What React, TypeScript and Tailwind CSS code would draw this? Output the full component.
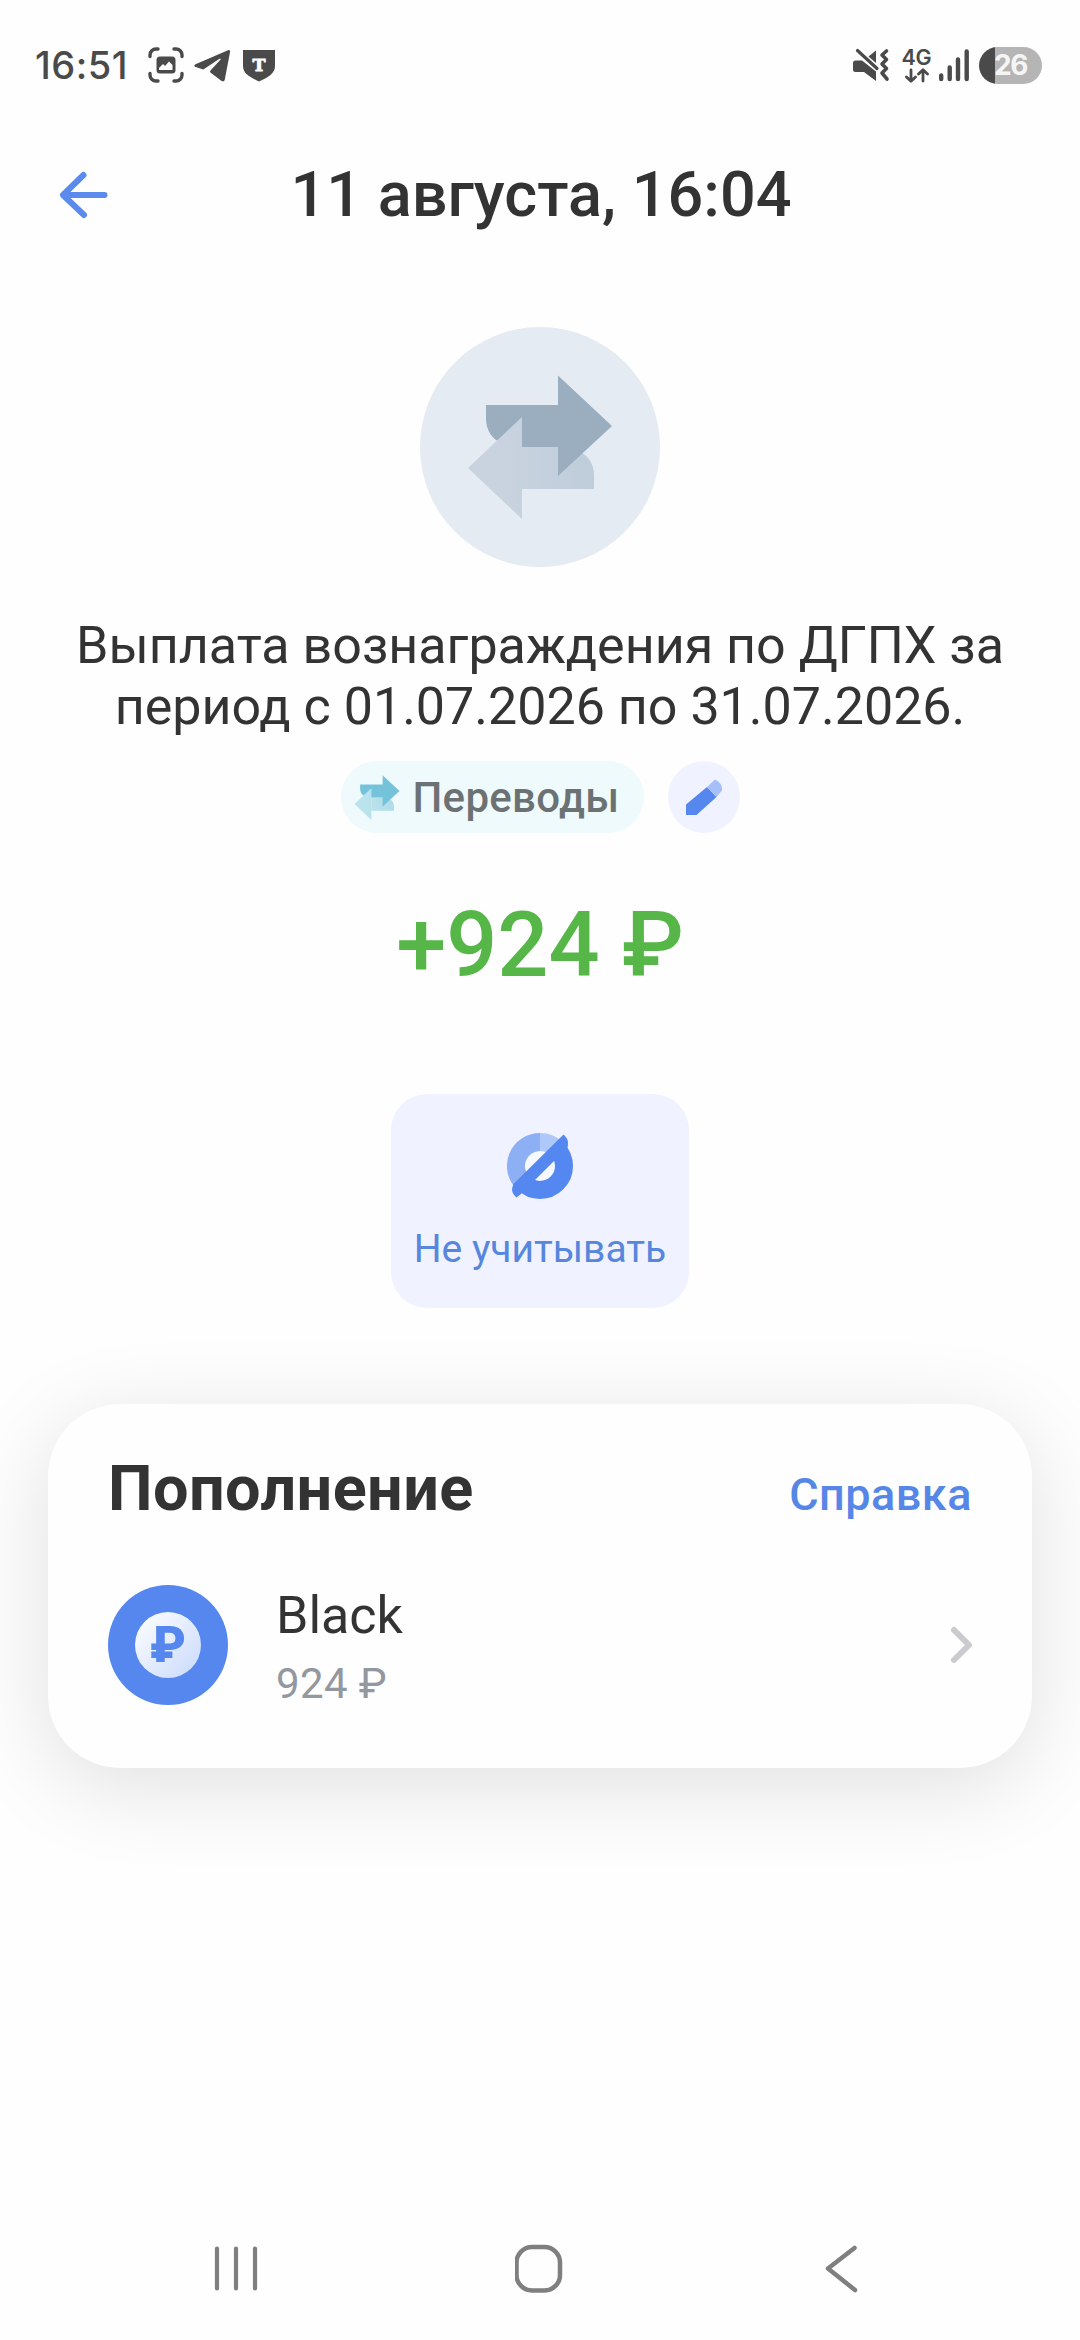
import React from "react";

function TransferArrows({ className, dark, lightA, lightB, id }: { className: string; dark: string; lightA: string; lightB: string; id: string }) {
  return (
    <svg className={className} viewBox="0 0 144 144" fill="none">
      <defs>
        <linearGradient id={id} x1="0" y1="0" x2="126" y2="0" gradientUnits="userSpaceOnUse">
          <stop offset="0.3" stopColor={lightA} />
          <stop offset="1" stopColor={lightB} />
        </linearGradient>
      </defs>
      <path d="M54 72H90C112 72 126 82 126 101V114H54Z" fill={`url(#${id})`} />
      <path d="M18 30H90V0.5L144 51L90 101V72H54C32 72 18 62 18 43Z" fill={dark} />
      <path d="M54 42V144L0 93Z" fill={`url(#${id})`} />
    </svg>
  );
}

function StatusBar() {
  return (
    <div className="flex h-[130px] items-center justify-between pr-[38px] pl-[35px] text-[#4a4a4a]">
      <div className="flex items-center">
        <span className="w-[113px] font-['Inter'] text-[38px] leading-none font-medium tracking-[0.5px] whitespace-nowrap">16:51</span>
        <svg className="h-[36px] w-[36px]" viewBox="0 0 36 36" fill="none" stroke="currentColor" strokeWidth="3.4" strokeLinecap="round">
          <path d="M2 9.500V8a6 6 0 0 1 6-6h2M26 2h2a6 6 0 0 1 6 6v1.500M34 26.500V28a6 6 0 0 1-6 6h-2M10 34H8a6 6 0 0 1-6-6v-1.500" />
          <rect x="8.500" y="9.500" width="19" height="17" rx="3.500" fill="currentColor" stroke="none" />
          <path d="M11 23v-2l4-4 2 2 4-4.500 3.500 3.500v5z" fill="#fefefe" stroke="none" />
        </svg>
        <svg className="ml-[9px] h-[36px] w-[38px]" viewBox="0 0 38 36" fill="currentColor">
          <path d="M35 3.200L2.500 17.200c-1.600.8-1.600 2.300.2 2.900l7.600 2.500L26.500 11.800c1-.5 1.600.2.900.9L17.500 23.500c-.6.700-.6 1.600.2 2.200l10.600 8c1.700 1.100 3 .7 3.500-1.300L37 5.200c.4-1.800-.6-2.600-2-2z" />
        </svg>
        <svg className="ml-[12px] h-[33px] w-[32px]" viewBox="0 0 32 33">
          <path d="M0 1H32V17C32 24 26 28 16 32.500C6 28 0 24 0 17Z" fill="currentColor" />
          <text x="16" y="22" textAnchor="middle" fontFamily="DejaVu Serif" fontWeight="700" fontSize="17.500" fill="#fefefe" stroke="#fefefe" strokeWidth="0.800">T</text>
        </svg>
      </div>
      <div className="flex items-center">
        <svg className="h-[34px] w-[37px]" viewBox="0 0 37 34" fill="currentColor">
          <path d="M0 15a2.500 2.500 0 0 1 2.500-2.500H9L23 23.500V33L11 24H2.500A2.500 2.500 0 0 1 0 21.500Z" />
          <path d="M15.500 8.500L23 2.500V15Z" />
          <path d="M4.500 2.500L24 20.500" stroke="currentColor" strokeWidth="3.200" strokeLinecap="round" />
          <path d="M33.500 3L29 7l4.500 4.500L29 16l4.500 4.500L29 25l5 6" fill="none" stroke="currentColor" strokeWidth="3.600" strokeLinecap="round" strokeLinejoin="round" />
        </svg>
        <div className="ml-[11px] flex w-[31px] flex-col items-center">
          <span className="font-['Inter'] text-[21.500px] leading-[19px] font-semibold tracking-[-0.300px]">4G</span>
          <svg className="mt-[1px] h-[15px] w-[26px]" viewBox="0 0 26 15" fill="none" stroke="currentColor" strokeWidth="2.800" strokeLinecap="round" strokeLinejoin="round">
            <path d="M7 2v11M2.500 9L7 13.300 11.500 9M19 13V2M14.500 6L19 1.700 23.500 6" />
          </svg>
        </div>
        <svg className="ml-[6px] h-[35px] w-[31px]" viewBox="0 0 31 35" stroke="currentColor" strokeWidth="4.400" strokeLinecap="round">
          <path d="M3.200 27.500V31M11.700 19.500V31M20 11.500V31M28.700 3.500V31" />
        </svg>
        <div className="ml-[10px] flex h-[37px] w-[63px] items-center justify-center overflow-hidden rounded-full bg-gradient-to-r from-[#4a4a4a] from-[25.500%] to-[#b5b5b5] to-[25.500%]">
          <span className="font-['Inter'] text-[28px] leading-none font-bold tracking-[-1.500px] text-[#f5f5f5]">26</span>
        </div>
      </div>
    </div>
  );
}

function Header() {
  return (
    <header className="flex h-[130px] items-center">
      <div className="flex w-[168px] pl-[58px]">
        <svg className="h-[50px] w-[50px]" viewBox="0 0 50 50" fill="none" stroke="#5a8aec" strokeWidth="6" strokeLinecap="round" strokeLinejoin="round">
          <path d="M46.500 25H5.500M25.500 5L5 25l21 20" />
        </svg>
      </div>
      <h1 className="flex-1 text-center text-[63px] leading-[74px] font-medium whitespace-nowrap">11 августа, 16:04</h1>
      <div className="w-[166px]" />
    </header>
  );
}

function ExcludeIcon() {
  return (
    <svg className="h-[66px] w-[66px] overflow-visible" viewBox="0 0 66 66" fill="none">
      <defs>
        <clipPath id="lowerHalf">
          <path d="M66 -4V66H-4Z" />
        </clipPath>
      </defs>
      <circle cx="33" cy="33" r="15" fill="#f6f9ff" />
      <path d="M33 9A24 24 0 0 0 16 50" stroke="#8cb0f3" strokeWidth="18" />
      <path d="M33 9A24 24 0 0 1 50 16" stroke="#afc8fa" strokeWidth="18" />
      <circle cx="33" cy="33" r="24" stroke="#5587f0" strokeWidth="18" clipPath="url(#lowerHalf)" />
      <path d="M56.500 1.500C60 4.500 62 8 60.500 14.500L14 61L9.500 64.500C5 61 3.500 56 7 50.500Z" fill="#5587f0" />
    </svg>
  );
}

function AccountCard() {
  return (
    <section className="mx-12 mt-[96px] h-[364px] rounded-[72px] bg-[#fefefe] px-[60px] pt-[48px] shadow-[0_18px_90px_rgba(0,0,0,0.12)]">
      <div className="flex items-center justify-between">
        <h2 className="text-[63px] leading-[74px] font-bold tracking-[0.400px]">Пополнение</h2>
        <a className="mt-[12px] text-[45px] leading-[52px] font-medium tracking-[0.500px] text-[#5787e6]">Справка</a>
      </div>
      <div className="mt-[59px] flex h-[120px] items-center">
        <div className="flex h-[120px] w-[120px] items-center justify-center rounded-full bg-[#5587ee]">
          <div className="flex h-[66px] w-[66px] items-center justify-center rounded-full bg-gradient-to-br from-white to-[#c9d9fb]">
            <span className="text-[50px] leading-[66px] font-black text-[#5587ee]">₽</span>
          </div>
        </div>
        <div className="mt-[5px] ml-[48px] flex flex-1 flex-col gap-[12px]">
          <span className="text-[52px] leading-[60px]">Black</span>
          <span className="text-[42px] leading-[52px] tracking-[0.400px] text-[#9397a0]">924 ₽</span>
        </div>
        <svg className="-mr-[3px] h-[42px] w-[30px]" viewBox="0 0 30 42" fill="none" stroke="#c9cbce" strokeWidth="6" strokeLinecap="round" strokeLinejoin="round">
          <path d="M9 6L24 21L9 36" />
        </svg>
      </div>
    </section>
  );
}

function NavBar() {
  return (
    <nav className="mt-auto flex h-[142px] items-center justify-between px-[212px] text-[#7f7f7f]">
      <svg className="h-[50px] w-[50px]" viewBox="0 0 50 50" fill="none" stroke="currentColor" strokeWidth="4.200" strokeLinecap="round">
        <path d="M5 4.500V44.500M24 4.500V44.500M43 4.500V44.500" />
      </svg>
      <svg className="h-[50px] w-[50px]" viewBox="0 0 50 50" fill="none" stroke="currentColor" strokeWidth="4.500">
        <rect x="1.500" y="3" width="43.500" height="43.500" rx="15.500" />
      </svg>
      <svg className="h-[50px] w-[50px]" viewBox="0 0 50 50" fill="none" stroke="currentColor" strokeWidth="4.500" strokeLinecap="round" strokeLinejoin="round">
        <path d="M36.500 4L10 24.500L37 46" />
      </svg>
    </nav>
  );
}

export default function App() {
  return (
    <div className="flex h-[2340px] w-[1080px] flex-col overflow-hidden bg-[#fefefe] font-['Roboto',sans-serif] text-[#333333]">
      <StatusBar />
      <Header />
      <main className="flex flex-col">
        <div className="mt-[67px] flex h-[240px] w-[240px] items-center justify-center self-center rounded-full bg-[#e5ebf2]">
          <TransferArrows id="big" className="h-[144px] w-[144px]" dark="#9aaec0" lightA="#c8d3df" lightB="#bfccda" />
        </div>
        <p className="mt-[48px] text-center text-[52px] leading-[61px] whitespace-nowrap">
          Выплата вознаграждения по ДГПХ за
          <br />
          период с 01.07.2026 по 31.07.2026.
        </p>
        <div className="mt-[24px] flex justify-center gap-6">
          <div className="flex h-[72px] w-[303px] items-center rounded-full bg-[#eefafc] pl-[13px]">
            <TransferArrows id="small" className="h-[45px] w-[46px]" dark="#75c3da" lightA="#bbe3ed" lightB="#aedce8" />
            <span className="mt-[2px] ml-[13px] text-[42px] leading-[50px] font-medium tracking-[0.300px] text-[#6c7274]">Переводы</span>
          </div>
          <div className="flex h-[72px] w-[72px] items-center justify-center rounded-full bg-[#f0f2ff]">
            <svg className="h-[36px] w-[36px]" viewBox="0 0 36 36">
              <path d="M0 36V25.500L21 8L30.500 18L10.500 36Z" fill="#5587ee" />
              <path d="M21 8L29 0.500C33.500 2.500 36.500 6 36 11.500L30.500 18Z" fill="#a5c0f9" />
            </svg>
          </div>
        </div>
        <div className="mt-[60px] text-center text-[90px] leading-[106px] font-medium text-[#56b748]">+924 ₽</div>
        <div className="mt-[95px] flex h-[214px] w-[298px] flex-col items-center self-center rounded-[36px] bg-[#f0f3ff] pt-[39px]">
          <ExcludeIcon />
          <span className="mt-[27px] text-[39px] leading-[46px] whitespace-nowrap text-[#5787dd]">Не учитывать</span>
        </div>
        <AccountCard />
      </main>
      <NavBar />
    </div>
  );
}
